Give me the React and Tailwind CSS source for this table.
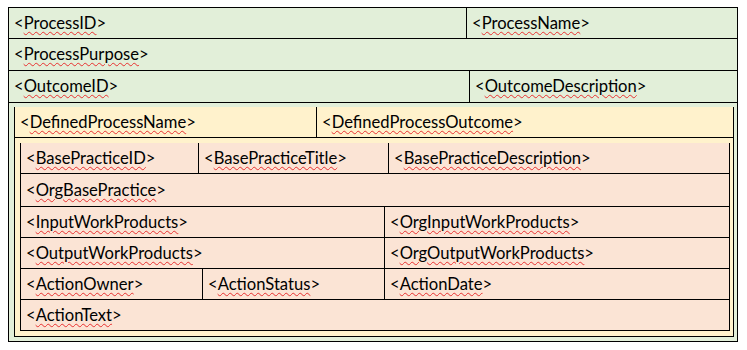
import React from "react";

// Word-style nested template table
function Tag({ name }) {
  return (
    <span className="whitespace-nowrap">
      &lt;
      <span className="underline decoration-wavy decoration-[#e83030] decoration-1 underline-offset-[2px]">{name}</span>
      &gt;
    </span>
  );
}

function Cell({ name, className = "" }) {
  return (
    <div className={`flex items-center px-[5px] ${className}`}>
      {name && <Tag name={name} />}
    </div>
  );
}

export default function App() {
  return (
    <div className="h-[350px] w-[747px] bg-white pt-[7px] pl-[8px] text-[16.6px] leading-none text-black" style={{ fontFamily: "Lato, 'Open Sans', sans-serif" }}>
      <div className="w-[730px] border border-black bg-[#e2efd9]">
        <div className="flex h-[31px] border-b border-black">
          <Cell name="ProcessID" className="w-[458px] border-r border-black" />
          <Cell name="ProcessName" className="flex-1" />
        </div>
        <div className="flex h-[32px] border-b border-black">
          <Cell name="ProcessPurpose" className="flex-1" />
        </div>
        <div className="flex h-[32px] border-b border-black">
          <Cell name="OutcomeID" className="w-[461px] border-r border-black" />
          <Cell name="OutcomeDescription" className="flex-1" />
        </div>
        <div className="pt-[4px] pr-[3px] pb-[4px] pl-[5px]">
          <div className="border-x border-b border-black bg-[#fff2cc]">
            <div className="flex h-[31px] border-b border-black">
              <Cell name="DefinedProcessName" className="w-[302px] border-r border-black" />
              <Cell name="DefinedProcessOutcome" className="flex-1" />
            </div>
            <div className="pt-[5px] pr-[3px] pb-[5px] pl-[5px]">
              <div className="border-x border-b border-black bg-[#fbe4d5]">
                <div className="flex h-[31px] border-b border-black">
                  <Cell name="BasePracticeID" className="w-[178px] border-r border-black" />
                  <Cell name="BasePracticeTitle" className="w-[190px] border-r border-black" />
                  <Cell name="BasePracticeDescription" className="flex-1" />
                </div>
                <div className="flex h-[33px] border-b border-black">
                  <Cell name="OrgBasePractice" className="flex-1" />
                </div>
                <div className="flex h-[31px] border-b border-black">
                  <Cell name="InputWorkProducts" className="w-[364px] border-r border-black" />
                  <Cell name="OrgInputWorkProducts" className="flex-1" />
                </div>
                <div className="flex h-[31px] border-b border-black">
                  <Cell name="OutputWorkProducts" className="w-[364px] border-r border-black" />
                  <Cell name="OrgOutputWorkProducts" className="flex-1" />
                </div>
                <div className="flex h-[31px] border-b border-black">
                  <Cell name="ActionOwner" className="w-[182px] border-r border-black" />
                  <Cell name="ActionStatus" className="w-[182px] border-r border-black" />
                  <Cell name="ActionDate" className="flex-1" />
                </div>
                <div className="flex h-[30px]">
                  <Cell name="ActionText" className="flex-1" />
                </div>
              </div>
            </div>
          </div>
        </div>
      </div>
    </div>
  );
}
